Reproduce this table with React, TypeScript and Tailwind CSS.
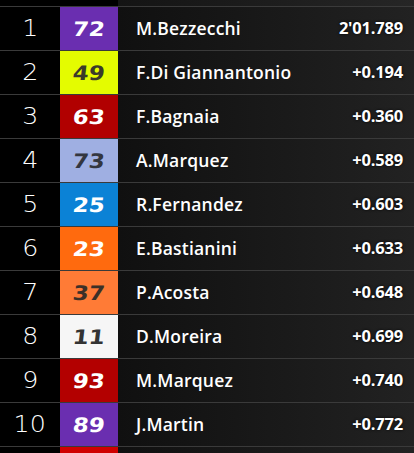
import React from 'react'

// Result rows: position, rider number, number box colours, name, gap
const rows = [
  { pos: 1, num: '72', box: 'bg-[#6a2eb0]', ink: 'text-white', name: 'M.Bezzecchi', time: "2'01.789" },
  { pos: 2, num: '49', box: 'bg-[#e4fc00]', ink: 'text-[#3a3a2a]', name: 'F.Di Giannantonio', time: '+0.194' },
  { pos: 3, num: '63', box: 'bg-[#b10000]', ink: 'text-white', name: 'F.Bagnaia', time: '+0.360' },
  { pos: 4, num: '73', box: 'bg-[#9fafe2]', ink: 'text-[#33363f]', name: 'A.Marquez', time: '+0.589' },
  { pos: 5, num: '25', box: 'bg-[#0b82d6]', ink: 'text-white', name: 'R.Fernandez', time: '+0.603' },
  { pos: 6, num: '23', box: 'bg-[#ff6a0e]', ink: 'text-white', name: 'E.Bastianini', time: '+0.633' },
  { pos: 7, num: '37', box: 'bg-[#ff7b36]', ink: 'text-[#3b3028]', name: 'P.Acosta', time: '+0.648' },
  { pos: 8, num: '11', box: 'bg-[#f6f6f6]', ink: 'text-[#333333]', name: 'D.Moreira', time: '+0.699' },
  { pos: 9, num: '93', box: 'bg-[#b30000]', ink: 'text-white', name: 'M.Marquez', time: '+0.740' },
  { pos: 10, num: '89', box: 'bg-[#6a2eb0]', ink: 'text-white', name: 'J.Martin', time: '+0.772' },
]

function Row({ r }: { r: (typeof rows)[number] }) {
  return (
    <div className="flex h-[44px] border-b border-[#3a3a3a]">
      <div className="flex w-[60px] items-center justify-center bg-black text-[23px] font-extralight text-white [font-family:'DejaVu_Sans',sans-serif]">
        <span className="scale-x-110">{r.pos}</span>
      </div>
      <div
        className={`flex w-[58px] items-center justify-center ${r.box} ${r.ink} text-[20px] font-black [font-family:'DejaVu_Sans',sans-serif]`}
      >
        <span className="-skew-x-6 scale-x-115">{r.num}</span>
      </div>
      <div className="flex flex-1 items-center justify-between bg-gradient-to-r from-[#101010] to-[#222222] pl-[18px] pr-[11px]">
        <span className="text-[17.5px] font-semibold tracking-[0.2px] text-white [font-family:'Open_Sans',sans-serif]">{r.name}</span>
        <span className="text-[16.5px] font-bold tracking-[-0.2px] text-white [font-family:'Open_Sans',sans-serif] [text-shadow:0_0_3px_#000]">
          {r.time}
        </span>
      </div>
    </div>
  )
}

export default function App() {
  return (
    <div className="h-[453px] w-[414px] overflow-hidden bg-black">
      {/* tail of the row above */}
      <div className="flex h-[7px] border-b border-[#3a3a3a]">
        <div className="w-[60px] bg-black" />
        <div className="w-[58px] bg-black" />
        <div className="flex-1 bg-gradient-to-r from-[#141414] to-[#262626]" />
      </div>
      {rows.map((r) => (
        <Row key={r.pos} r={r} />
      ))}
      {/* head of the row below */}
      <div className="flex h-[10px]">
        <div className="w-[60px] bg-black" />
        <div className="w-[58px] bg-[#d00000]" />
        <div className="flex-1 bg-gradient-to-r from-[#101010] to-[#222222]" />
      </div>
    </div>
  )
}
